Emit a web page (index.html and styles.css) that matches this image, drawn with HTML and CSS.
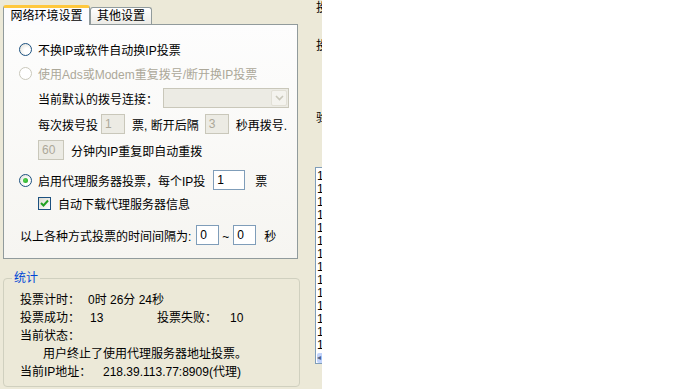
FILE: index.html
```html
<!DOCTYPE html>
<html lang="zh-CN">
<head>
    <meta charset="UTF-8">
    <title>投票设置</title>
    <link rel="stylesheet" href="styles.css">
</head>
<body>

<div class="window">
    <!-- left: settings tabs + statistics -->
    <div class="main">
        <div class="tabs">
            <div class="tab active">网络环境设置</div>
            <div class="tab">其他设置</div>
        </div>

        <div class="page">
            <div class="row r1">
                <span class="radio"></span>
                <span>不换IP或软件自动换IP投票</span>
            </div>
            <div class="row r2 disabled">
                <span class="radio off"></span>
                <span>使用Ads或Modem重复拨号/断开换IP投票</span>
            </div>
            <div class="row r3 indent">
                <span>当前默认的拨号连接：</span>
                <span class="combo"><span class="combo-btn"><svg width="9" height="6" viewBox="0 0 9 6"><path d="M1 1 L4.5 4.5 L8 1" fill="none" stroke="#c9c7ba" stroke-width="1.6"/></svg></span></span>
            </div>
            <div class="row r4 indent">
                <span>每次拨号投</span>
                <span class="field dim w24">1</span>
                <span class="after">票, 断开后隔</span>
                <span class="field dim w24 gap">3</span>
                <span class="after">秒再拨号.</span>
            </div>
            <div class="row r5 indent">
                <span class="field dim w26">60</span>
                <span class="after">分钟内IP重复即自动重拨</span>
            </div>
            <div class="row r6">
                <span class="radio on"></span>
                <span>启用代理服务器投票，每个IP投</span>
                <span class="field w32">1</span>
                <span class="after wide">票</span>
            </div>
            <div class="row r7 indent">
                <span class="check"><svg width="9" height="9" viewBox="0 0 9 9"><path d="M1 4 L3.5 6.5 L8 1.5" fill="none" stroke="#21a121" stroke-width="2"/></svg></span>
                <span>自动下载代理服务器信息</span>
            </div>
            <div class="row r8">
                <span>以上各种方式投票的时间间隔为:</span>
                <span class="field w23">0</span>
                <span class="tilde">~</span>
                <span class="field w23">0</span>
                <span class="after wide">秒</span>
            </div>
        </div>

        <fieldset class="group">
            <legend>统计</legend>
            <div class="stat"><span class="lbl">投票计时：</span><span>0时 26分 24秒</span></div>
            <div class="stat"><span class="lbl">投票成功：</span><span class="num">13</span><span class="lbl2">投票失败：</span><span>10</span></div>
            <div class="stat"><span>当前状态：</span></div>
            <div class="stat status">用户终止了使用代理服务器地址投票。</div>
            <div class="stat"><span class="lbl ip">当前IP地址：</span><span>218.39.113.77:8909(代理)</span></div>
        </fieldset>
    </div>

    <!-- right: clipped edge of the next column -->
    <div class="side">
        <div class="cut c1">投</div>
        <div class="cut c2">投</div>
        <div class="cut c3">验</div>
        <div class="list">
            <div>1</div><div>1</div><div>1</div><div>1</div><div>1</div>
            <div>1</div><div>1</div><div>1</div><div>1</div><div>1</div>
            <div>1</div><div>1</div><div>1</div><div>1</div>
            <div class="hscroll"><span class="arrow">◂</span></div>
        </div>
    </div>

    <div class="blank"></div>
</div>

</body>
</html>
```

FILE: styles.css
```css
body {
    margin: 0;
    padding: 0;
    font-family: 'Liberation Sans', 'Noto Sans CJK SC', sans-serif;
    font-size: 12px;
    color: #000;
    background-color: #fff;
}

.window {
    display: flex;
    width: 683px;
    height: 389px;
    overflow: hidden;
}

.main {
    width: 300px;
    background-color: #ece9d8;
}

/* Tabs */
.tabs {
    display: flex;
    align-items: flex-end;
    height: 24px;
    padding-left: 3px;
}

.tab {
    box-sizing: border-box;
    height: 17px;
    width: 62px;
    border: 1px solid #919b9c;
    border-bottom: none;
    border-radius: 3px 3px 0 0;
    background: linear-gradient(#ffffff, #ecebe6);
    text-align: center;
    line-height: 16px;
}

.tab.active {
    position: relative;
    z-index: 1;
    width: 87px;
    height: 20px;
    margin-bottom: -1px;
    border-top: 3px solid #ffc83c;
    background: #fcfcfe;
    line-height: 16px;
}

/* Tab page */
.page {
    box-sizing: border-box;
    width: 295px;
    height: 235px;
    margin-left: 3px;
    padding: 12px 0 0 15px;
    border: 1px solid #919b9c;
    background: linear-gradient(#fdfdfd, #f6f5f1);
}

.row {
    display: flex;
    align-items: center;
    height: 24px;
    white-space: nowrap;
}

.r3, .r4, .r5 { height: 26px; }
.r6 { height: 20px; margin-top: 7px; }
.r7 { height: 26px; }
.r8 { height: 20px; margin-top: 9px; margin-left: 1px; }

.indent { padding-left: 19px; }

.disabled { color: #aca899; }

.radio {
    box-sizing: border-box;
    width: 13px;
    height: 13px;
    margin-right: 6px;
    border: 1px solid #1c5180;
    border-radius: 50%;
    background: radial-gradient(circle at 65% 65%, #fff 30%, #dcdad0 100%);
    display: flex;
    align-items: center;
    justify-content: center;
}

.radio.off {
    border-color: #cac8bb;
    background: #fff;
}

.radio.on::after {
    content: "";
    width: 5px;
    height: 5px;
    border-radius: 50%;
    background: radial-gradient(circle at 40% 40%, #55d551, #21a121);
}

.check {
    box-sizing: border-box;
    width: 13px;
    height: 13px;
    margin-right: 7px;
    border: 1px solid #1c5180;
    background: linear-gradient(135deg, #dcdad0, #fff);
    display: flex;
    align-items: center;
    justify-content: center;
}

.combo {
    box-sizing: border-box;
    width: 126px;
    height: 20px;
    margin-left: 5px;
    border: 1px solid #c9c7ba;
    background: #ecebe4;
    display: flex;
    justify-content: flex-end;
    padding: 1px;
}

.combo-btn {
    box-sizing: border-box;
    width: 16px;
    height: 16px;
    border: 1px solid #e2e0d6;
    border-radius: 2px;
    background: #f4f3ee;
    display: flex;
    align-items: center;
    justify-content: center;
}

.field {
    box-sizing: border-box;
    height: 20px;
    margin-left: 3px;
    padding: 1px 0 0 3px;
    border: 1px solid #7f9db9;
    background: #fff;
    line-height: 16px;
}

.field.dim {
    border-color: #c9c7ba;
    background: #ecebe4;
    color: #aca899;
}

.w23 { width: 23px; margin-left: 5px; }
.w24 { width: 24px; }
.w24.gap { margin-left: 6px; }
.w26 { width: 26px; margin-left: 0; }
.w32 { width: 32px; margin-left: 8px; }

.after { margin-left: 7px; }
.after.wide { margin-left: 10px; }
.r8 .after.wide { margin-left: 8px; }

.tilde {
    margin: 4px 0 0 3px;
    width: 8px;
}
.tilde + .field { margin-left: 3px; }

/* Statistics group */
.group {
    box-sizing: border-box;
    width: 297px;
    height: 116px;
    margin: 12px 0 0 3px;
    padding: 5px 0 0 16px;
    border: 1px solid #d0d0bf;
    border-radius: 4px;
}

.group legend {
    margin-left: -8px;
    padding: 0 2px;
    color: #0046d5;
    line-height: 15px;
}

.stat {
    height: 18px;
    line-height: 18px;
    white-space: nowrap;
}

.lbl { display: inline-block; width: 68px; }
.lbl.ip { width: 83px; }
.num { display: inline-block; width: 67px; padding-left: 2px; }
.lbl2 { display: inline-block; width: 73px; }
.status { padding-left: 23px; }

/* Right-hand clipped column */
.side {
    width: 22px;
    overflow: hidden;
    background-color: #ece9d8;
}

.cut {
    margin-left: 16px;
    height: 12px;
    line-height: 12px;
}

.c1 { margin-top: 2px; }
.c2 { margin-top: 26px; }
.c3 { margin-top: 60px; }

.list {
    box-sizing: border-box;
    width: 120px;
    height: 197px;
    margin: 43px 0 0 15px;
    padding: 2px 0 0 1px;
    border: 1px solid #7f9db9;
    background: #fff;
}

.list div {
    height: 13px;
    line-height: 13px;
}

.list .hscroll {
    height: 10px;
    margin: 1px 0 0 0;
    background: #c1d3fb;
    border-radius: 2px;
    font-size: 8px;
    line-height: 10px;
    color: #4d6185;
}

.blank {
    flex: 1;
    background: #fff;
}
```
